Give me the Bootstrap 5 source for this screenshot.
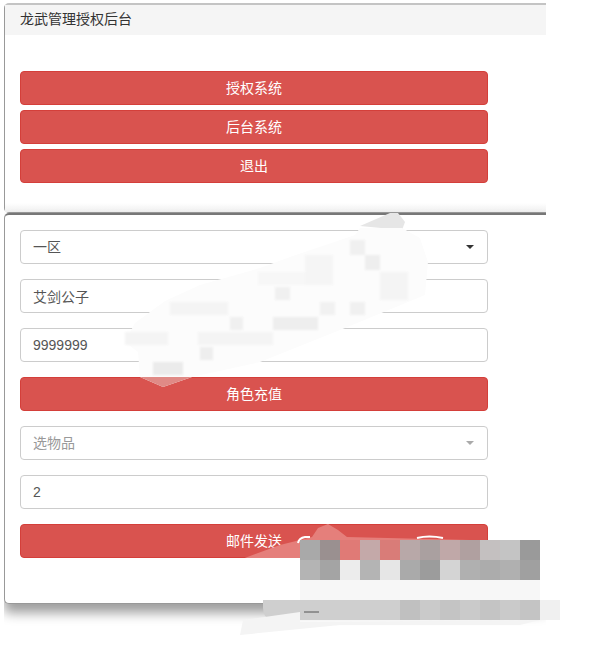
<!DOCTYPE html>
<html lang="zh-CN">
<head>
  <meta charset="UTF-8">
  <meta name="viewport" content="width=device-width, initial-scale=1.0">
  <title>龙武管理授权后台</title>
  <link href="https://cdn.jsdelivr.net/npm/bootstrap@5.3.0/dist/css/bootstrap.min.css" rel="stylesheet">
  <script src="https://cdn.jsdelivr.net/npm/bootstrap@5.3.0/dist/js/bootstrap.bundle.min.js"></script>
  <style>
    body {
      position: relative;
      height: 646px;
      overflow: hidden;
      background-color: #fff;
      font-family: "Liberation Sans", "Noto Sans CJK SC", sans-serif;
      font-size: 14px;
      color: #333;
    }
    .shell {
      width: 542px;
      margin: 3px 0 0 4px;
      padding-bottom: 30px;
      overflow: hidden;
    }
    .panel-box {
      border: 1px solid #999;
      border-right: 0;
      border-radius: 5px 0 0 5px;
    }
    .panel-top {
      height: 210px;
      border-top: 2px solid #c4c4c4;
    }
    .panel-top .card-header {
      height: 30px;
      padding: 4px 15px;
      line-height: 20px;
      background-color: #f5f5f5;
      border: 0;
      border-radius: 0;
      color: #333;
    }
    .panel-top .card-body {
      padding: 36px 58px 0 15px;
      gap: 5px;
      background: linear-gradient(to bottom, #fff 168px, #efefef 100%);
    }
    .panel-main {
      height: 391px;
      border-top-color: #777;
      border-top-width: 2px;
      box-shadow: 0 9px 12px rgba(0, 0, 0, .38);
    }
    .panel-main .card-body {
      padding: 15px 58px 0 15px;
      gap: 15px;
    }
    .btn-red {
      height: 34px;
      padding: 6px 12px;
      font-size: 14px;
      line-height: 20px;
      color: #fff;
      background-color: #d9534f;
      border: 1px solid #d43f3a;
      border-radius: 4px;
    }
    .field {
      height: 34px;
      padding: 6px 12px;
      font-size: 14px;
      line-height: 20px;
      color: #555;
      border: 1px solid #ccc;
      border-radius: 4px;
      box-shadow: none;
    }
    .field-pick {
      background-image: url("data:image/svg+xml,%3Csvg xmlns='http://www.w3.org/2000/svg' width='8' height='4'%3E%3Cpath d='M0 0h8L4 4z' fill='%23333'/%3E%3C/svg%3E");
      background-position: right 13px center;
      background-size: 8px 4px;
    }
    .field-empty {
      color: #999;
      background-image: url("data:image/svg+xml,%3Csvg xmlns='http://www.w3.org/2000/svg' width='8' height='4'%3E%3Cpath d='M0 0h8L4 4z' fill='%23aaa'/%3E%3C/svg%3E");
    }
    .smudge {
      position: absolute;
      top: 0;
      left: 0;
      pointer-events: none;
    }
    .smudge-soft {
      filter: blur(1px);
    }
  </style>
</head>
<body>

  <div class="shell">
    <div class="card panel-box panel-top">
      <div class="card-header">龙武管理授权后台</div>
      <div class="card-body d-grid align-content-start">
        <button type="button" class="btn btn-red">授权系统</button>
        <button type="button" class="btn btn-red">后台系统</button>
        <button type="button" class="btn btn-red">退出</button>
      </div>
    </div>

    <div class="card panel-box panel-main">
      <div class="card-body d-grid align-content-start">
        <select class="form-select field field-pick">
          <option>一区</option>
        </select>
        <input type="text" class="form-control field" value="艾剑公子">
        <input type="text" class="form-control field" value="9999999">
        <button type="button" class="btn btn-red">角色充值</button>
        <select class="form-select field field-pick field-empty">
          <option>选物品</option>
        </select>
        <input type="text" class="form-control field" value="2">
        <button type="button" class="btn btn-red">邮件发送</button>
      </div>
    </div>
  </div>

  <!-- 打码区域 -->
  <svg class="smudge" width="605" height="646" viewBox="0 0 605 646">
    <path d="M360 226 390 213h8l7 9-3 8z" fill="#e6e6e6"/>
    <path d="M125 342 135 323 165 301 200 285 260 268 290 257 355 235 360 228 402 228 420 238 428 262 425 295 345 328 260 362 192 377 163 387 140 377 138 352z" fill="#fcfcfc"/>
    <g class="smudge-soft" fill="#f4f4f4">
      <rect x="350" y="240" width="15" height="15" fill="#f0f0f0"/>
      <rect x="365" y="255" width="15" height="15" fill="#eee"/>
      <rect x="305" y="255" width="28" height="30" fill="#f5f5f5"/>
      <rect x="258" y="272" width="47" height="13" fill="#f7f7f7"/>
      <rect x="275" y="287" width="15" height="13" fill="#f0f0f0"/>
      <rect x="380" y="272" width="28" height="28"/>
      <rect x="320" y="302" width="15" height="13" fill="#f1f1f1"/>
      <rect x="350" y="302" width="15" height="13" fill="#f0f0f0"/>
      <rect x="273" y="317" width="45" height="13" fill="#eee"/>
      <rect x="170" y="302" width="58" height="13"/>
      <rect x="230" y="317" width="13" height="13" fill="#f0f0f0"/>
      <rect x="125" y="332" width="43" height="13"/>
      <rect x="198" y="332" width="75" height="13"/>
      <rect x="200" y="347" width="13" height="13" fill="#eee"/>
      <rect x="153" y="362" width="30" height="13" fill="#ebebeb"/>
    </g>
    <path d="M140 377h52l-29 10z" fill="#e08a86"/>

    <path d="M242 559 280 545 312 537 318 528 328 524 338 530 347 537 470 540V560H242z" fill="#e57f7b"/>
    <path d="M242 558H300V603H242z" fill="#fff"/>
    <path d="M298 543q1-5 7-6h5M417 538q12-3 26 0" fill="none" stroke="#fff" stroke-width="2"/>
    <g>
      <rect x="300" y="540" width="20" height="20" fill="#a9a9a9"/>
      <rect x="320" y="540" width="20" height="20" fill="#9a9090"/>
      <rect x="340" y="540" width="20" height="20" fill="#e07a76"/>
      <rect x="360" y="540" width="20" height="20" fill="#c4a9a9"/>
      <rect x="380" y="540" width="20" height="20" fill="#d97c78"/>
      <rect x="400" y="540" width="20" height="20" fill="#b8a8a8"/>
      <rect x="420" y="540" width="20" height="20" fill="#aaa0a0"/>
      <rect x="440" y="540" width="20" height="20" fill="#c0a8a8"/>
      <rect x="460" y="540" width="20" height="20" fill="#b0a0a0"/>
      <rect x="480" y="540" width="20" height="20" fill="#c4c0c0"/>
      <rect x="500" y="540" width="20" height="20" fill="#c4c4c4"/>
      <rect x="520" y="540" width="20" height="20" fill="#9a9a9a"/>
      <rect x="300" y="560" width="20" height="20" fill="#b4b4b4"/>
      <rect x="320" y="560" width="20" height="20" fill="#a4a4a4"/>
      <rect x="340" y="560" width="20" height="20" fill="#ececec"/>
      <rect x="360" y="560" width="20" height="20" fill="#b4b4b4"/>
      <rect x="380" y="560" width="20" height="20" fill="#e6e6e6"/>
      <rect x="400" y="560" width="20" height="20" fill="#aaa"/>
      <rect x="420" y="560" width="20" height="20" fill="#9c9c9c"/>
      <rect x="440" y="560" width="20" height="20" fill="#d4d4d4"/>
      <rect x="460" y="560" width="20" height="20" fill="#b0b0b0"/>
      <rect x="480" y="560" width="20" height="20" fill="#acacac"/>
      <rect x="500" y="560" width="20" height="20" fill="#b0b0b0"/>
      <rect x="520" y="560" width="20" height="20" fill="#a0a0a0"/>
      <rect x="300" y="580" width="240" height="20" fill="#f7f7f7"/>
      <path d="M263 600H300V620H272q-9-2-9-12z" fill="#cfcfcf"/>
      <rect x="300" y="600" width="100" height="20" fill="#cfcfcf"/>
      <rect x="400" y="600" width="20" height="20" fill="#c0c0c0"/>
      <rect x="420" y="600" width="20" height="20" fill="#cacaca"/>
      <rect x="440" y="600" width="20" height="20" fill="#c4c4c4"/>
      <rect x="460" y="600" width="20" height="20" fill="#cacaca"/>
      <rect x="480" y="600" width="20" height="20" fill="#c4c4c4"/>
      <rect x="500" y="600" width="20" height="20" fill="#cacaca"/>
      <rect x="520" y="600" width="20" height="20" fill="#c4c4c4"/>
      <rect x="540" y="600" width="20" height="20" fill="#f0f0f0"/>
      <path d="M243 620 300 612V622L540 620 520 625H340L240 635z" fill="#f4f4f4"/>
      <path d="M304 612h15" stroke="#555" stroke-width="1"/>
    </g>
  </svg>

</body>
</html>
